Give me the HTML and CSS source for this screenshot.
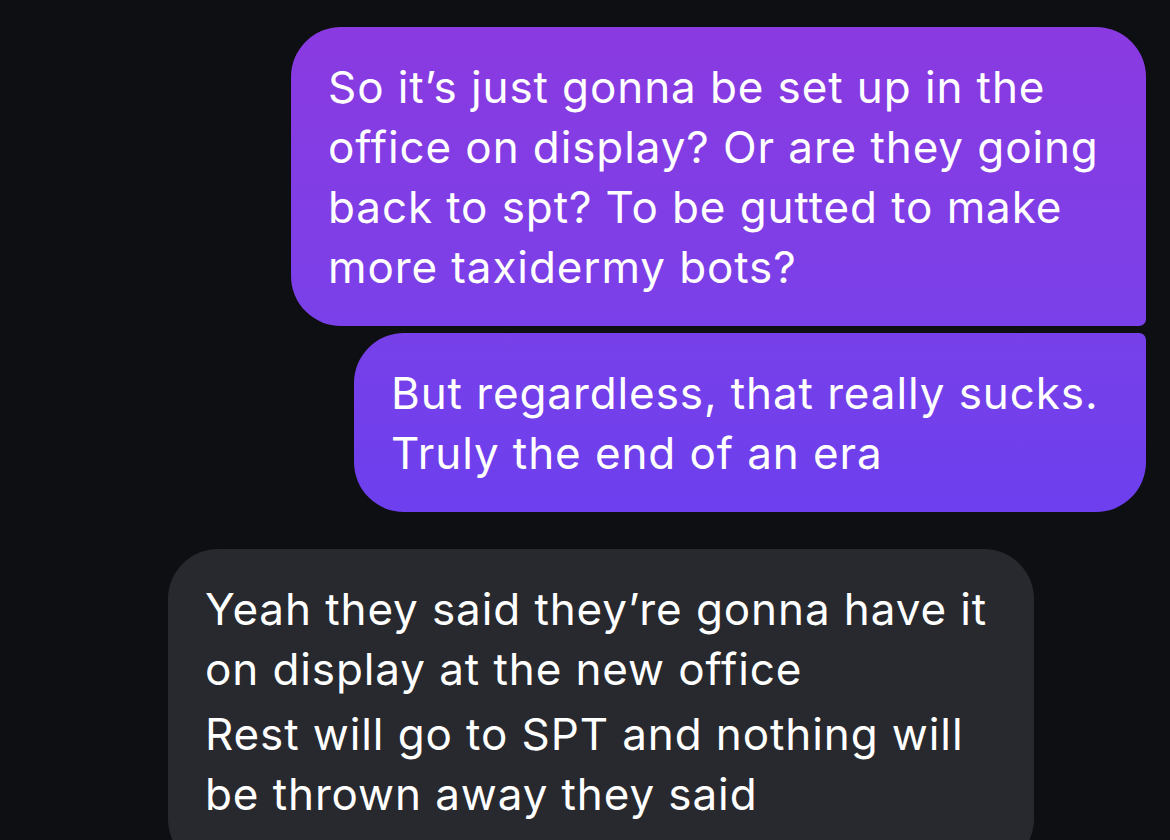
FILE: index.html
```html
<!DOCTYPE html>
<html lang="en">
  <head>
    <meta charset="UTF-8" />
    <meta name="viewport" content="width=device-width, initial-scale=1.0" />
    <title>Messages</title>
    <link rel="stylesheet" href="styles.css">
  </head>
  <body>
    <div class="thread">
      <div class="group outgoing">
        <div class="bubble sent first">
          So it’s just gonna be set up in the<br />
          office on display? Or are they going<br />
          back to spt? To be gutted to make<br />
          more taxidermy bots?
        </div>
        <div class="bubble sent last">
          But regardless, that really sucks.<br />
          Truly the end of an era
        </div>
      </div>
      <div class="group incoming">
        <div class="bubble received">
          <p>Yeah they said they’re gonna have it<br />on display at the new office</p>
          <p>Rest will go to SPT and nothing will<br />be thrown away they said</p>
        </div>
      </div>
    </div>
  </body>
</html>
```

FILE: styles.css
```css
body {
  margin: 0;
  background: #0d0f13;
  font-family: Inter, "Noto Sans", sans-serif;
  color: #fff;
  overflow: hidden;
}
.thread {
  display: flex;
  flex-direction: column;
  padding-top: 27px;
}
.group {
  display: flex;
  flex-direction: column;
  gap: 7px;
}
.outgoing {
  align-items: flex-end;
  padding-right: 24px;
}
.incoming {
  align-items: flex-start;
  padding-left: 168px;
  margin-top: 37px;
}
.bubble {
  box-sizing: border-box;
  font-size: 44px;
  letter-spacing: 0.9px;
  line-height: 60px;
  padding: 30px 37px;
  border-radius: 50px;
}
.sent.first {
  width: 855px;
  height: 299px;
  border-bottom-right-radius: 7px;
  background: linear-gradient(180deg, #8a3ae0 0%, #7a40e9 100%);
}
.sent.last {
  width: 792px;
  height: 179px;
  border-top-right-radius: 7px;
  background: linear-gradient(180deg, #7740e9 0%, #6d3fee 100%);
}
.received {
  width: 866px;
  background: #27292e;
  padding-bottom: 40px;
}
.received p {
  margin: 0 0 5px;
}
```
